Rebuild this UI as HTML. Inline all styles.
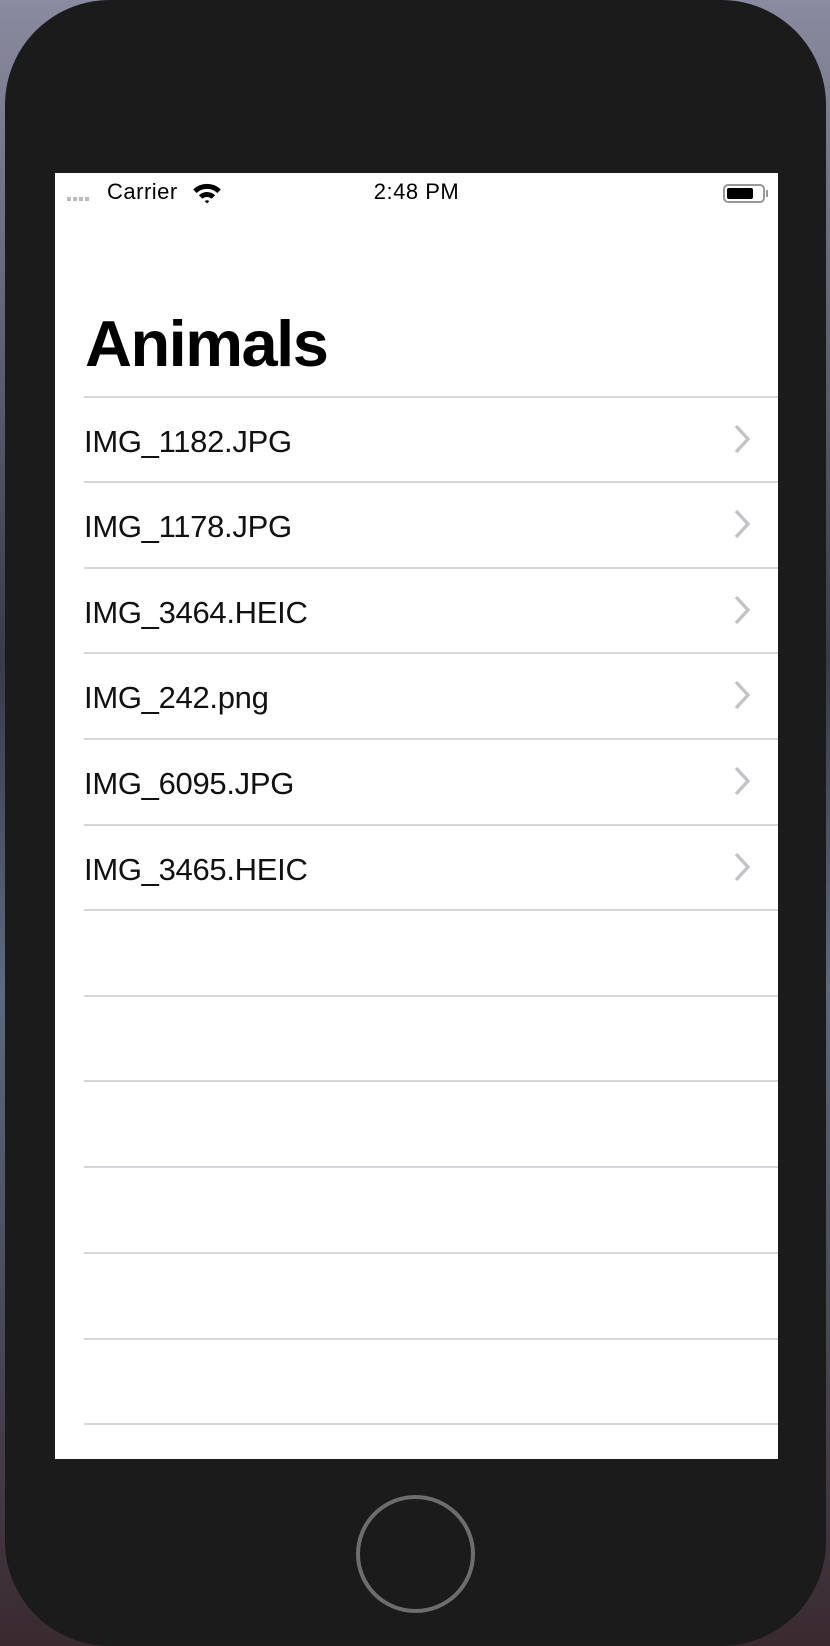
<!DOCTYPE html>
<html><head><style>
*{margin:0;padding:0;box-sizing:border-box}
html,body{width:830px;height:1646px;overflow:hidden}
body{background:linear-gradient(180deg,#8a8aa0 0%,#3a3a4a 40%,#5a6a80 60%,#3a2a30 100%);font-family:"Liberation Sans",sans-serif;position:relative}
.phone{position:absolute;left:5px;top:0;width:821px;height:1646px;background:#1b1b1b;border-radius:105px}
.screen{position:absolute;left:55px;top:173px;width:723px;height:1286px;background:#fff;overflow:hidden}
.sb{position:absolute;top:0;left:0;width:100%;height:40px;font-size:22px;color:#000}
.row{position:absolute;left:29px;right:0;height:86px;border-top:2px solid #d6d6da}
.row span{position:absolute;left:0;top:26px;font-size:31px;color:#111;letter-spacing:-0.3px}
.row svg{position:absolute;right:28px;top:26px}
.home{position:absolute;left:356px;top:1495px;width:119px;height:118px;border:4px solid #6d6d6d;border-radius:50%}
</style></head><body>
<div class="phone"></div>
<div class="screen">
<div class="sb">
<div style="position:absolute;left:12px;top:24px;width:22px;height:4px;background:repeating-linear-gradient(90deg,#bbb 0 4px,transparent 4px 6px)"></div>
<div style="position:absolute;left:52px;top:6px;letter-spacing:0.5px">Carrier</div>
<svg style="position:absolute;left:137px;top:9px" width="30" height="22" viewBox="0 0 26 18"><path d="M1 6 A17 17 0 0 1 25 6 L22 9 A13 13 0 0 0 4 9Z M6 11 A10 10 0 0 1 20 11 L17 14 A6 6 0 0 0 9 14Z M11 16 A3 3 0 0 1 15 16 L13 18Z" fill="#000"/></svg>
<div style="position:absolute;left:0;width:100%;text-align:center;top:6px;letter-spacing:0.5px">2:48 PM</div>
<div style="position:absolute;left:668px;top:11px;width:42px;height:19px;border:2px solid #999;border-radius:5px;padding:2px"><div style="width:26px;height:100%;background:#000;border-radius:2px"></div></div>
<div style="position:absolute;left:711px;top:17px;width:2px;height:7px;background:#999"></div>
</div>
<div style="position:absolute;left:30px;top:133px;font-size:65px;font-weight:bold;letter-spacing:-1.5px">Animals</div>
<div class="row" style="top:223px"><span>IMG_1182.JPG</span><svg width="16" height="30" viewBox="0 0 16 30"><path d="M2 2 L14 15 L2 28" stroke="#c4c4c8" stroke-width="3.5" fill="none"/></svg></div>
<div class="row" style="top:308px"><span>IMG_1178.JPG</span><svg width="16" height="30" viewBox="0 0 16 30"><path d="M2 2 L14 15 L2 28" stroke="#c4c4c8" stroke-width="3.5" fill="none"/></svg></div>
<div class="row" style="top:394px"><span>IMG_3464.HEIC</span><svg width="16" height="30" viewBox="0 0 16 30"><path d="M2 2 L14 15 L2 28" stroke="#c4c4c8" stroke-width="3.5" fill="none"/></svg></div>
<div class="row" style="top:479px"><span>IMG_242.png</span><svg width="16" height="30" viewBox="0 0 16 30"><path d="M2 2 L14 15 L2 28" stroke="#c4c4c8" stroke-width="3.5" fill="none"/></svg></div>
<div class="row" style="top:565px"><span>IMG_6095.JPG</span><svg width="16" height="30" viewBox="0 0 16 30"><path d="M2 2 L14 15 L2 28" stroke="#c4c4c8" stroke-width="3.5" fill="none"/></svg></div>
<div class="row" style="top:651px"><span>IMG_3465.HEIC</span><svg width="16" height="30" viewBox="0 0 16 30"><path d="M2 2 L14 15 L2 28" stroke="#c4c4c8" stroke-width="3.5" fill="none"/></svg></div>
<div class="row" style="top:736px"></div>
<div class="row" style="top:822px"></div>
<div class="row" style="top:907px"></div>
<div class="row" style="top:993px"></div>
<div class="row" style="top:1079px"></div>
<div class="row" style="top:1165px"></div>
<div class="row" style="top:1250px"></div>
</div>
<div class="home"></div>
</body></html>
